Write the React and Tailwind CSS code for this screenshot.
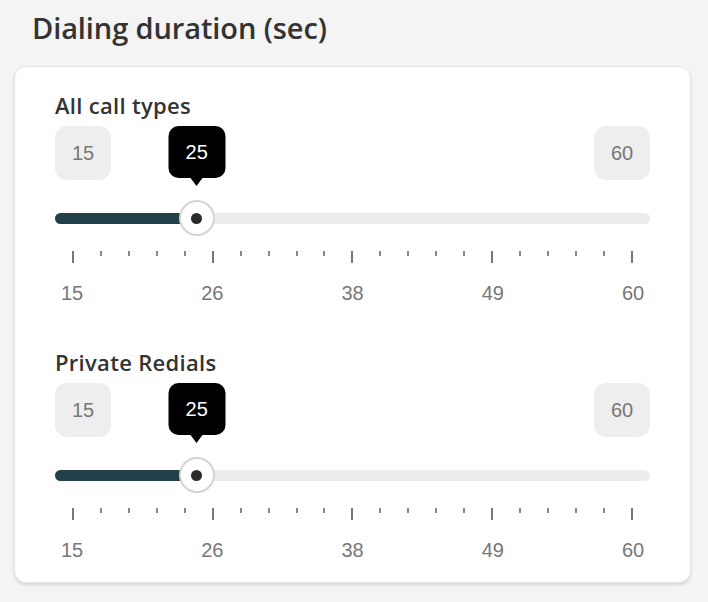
import React from 'react';

const sliders = [
  { label: 'All call types', min: 15, max: 60, value: 25 },
  { label: 'Private Redials', min: 15, max: 60, value: 25 },
];

const marks = [15, 26, 38, 49, 60];
const ticks = Array.from({ length: 21 }, (_, i) => i);

const Slider = ({ label, min, max, value }) => {
  const pct = ((value - min) / (max - min)) * 100;
  return (
    <div>
      <div className="text-[22px] leading-[28px] tracking-[0.3px] text-[#333] font-semibold" style={{ fontFamily: '"Open Sans", sans-serif' }}>
        {label}
      </div>
      {/* min / max / current value */}
      <div className="relative mt-[7px] flex justify-between h-[54px]">
        <div className="w-[56px] h-[54px] rounded-[12px] bg-[#eeeeee] flex items-center justify-center text-[20px] text-[#777]">
          {min}
        </div>
        <div className="absolute inset-y-0 left-[17px] right-[17px]">
          <div className="absolute top-0 -translate-x-1/2 flex flex-col items-center" style={{ left: `${pct}%` }}>
            <div className="w-[57px] h-[52px] rounded-[10px] bg-black text-white flex items-center justify-center text-[20px]">
              {value}
            </div>
            <div className="w-0 h-0 border-l-[6px] border-r-[6px] border-t-[8px] border-l-transparent border-r-transparent border-t-black" />
          </div>
        </div>
        <div className="w-[56px] h-[54px] rounded-[12px] bg-[#eeeeee] flex items-center justify-center text-[20px] text-[#777]">
          {max}
        </div>
      </div>
      {/* track */}
      <div className="relative mt-[20px] h-9 flex items-center">
        <div className="w-full h-[11px] rounded-full bg-[#ececec] overflow-hidden">
          <div className="h-full bg-[#233f4a]" style={{ width: `calc(17px + ${pct / 100} * (100% - 34px))` }} />
        </div>
        <div className="absolute inset-y-0 left-[17px] right-[17px]">
          <div
            className="absolute top-0 -translate-x-1/2 w-9 h-9 rounded-full bg-white border-2 border-[#d4d4d4] flex items-center justify-center"
            style={{ left: `${pct}%` }}
          >
            <div className="w-[11px] h-[11px] rounded-full bg-[#2b2b2b]" />
          </div>
        </div>
      </div>
      {/* ticks */}
      <div className="mx-[17px] mt-[15px] h-3 flex justify-between items-start">
        {ticks.map((i) => (
          <div key={i} className={i % 5 === 0 ? 'w-[2px] h-[12px] bg-[#777]' : 'w-[2px] h-[5px] bg-[#888]'} />
        ))}
      </div>
      <div className="mx-[17px] mt-[18px] flex justify-between">
        {marks.map((m) => (
          <div key={m} className="w-0 flex justify-center">
            <span className="whitespace-nowrap text-[20px] leading-6 text-[#777]">{m}</span>
          </div>
        ))}
      </div>
    </div>
  );
};

export default function App() {
  return (
    <div className="w-[708px] h-[602px] bg-[#f4f4f4] pt-[10px]" style={{ fontFamily: '"Liberation Sans", Arial, sans-serif' }}>
      <h1 className="ml-[32px] text-[29px] leading-[36px] tracking-[-0.1px] font-semibold text-[#333]" style={{ fontFamily: '"Open Sans", sans-serif' }}>
        Dialing duration (sec)
      </h1>
      <div className="ml-[14px] mr-[17px] mt-[20px] rounded-[12px] bg-white border border-[#e4e4e4] shadow-[0_2px_3px_rgba(0,0,0,0.12)] px-[40px] pt-6 pb-[20px] flex flex-col gap-[43px]">
        {sliders.map((s) => (
          <Slider key={s.label} {...s} />
        ))}
      </div>
    </div>
  );
}
